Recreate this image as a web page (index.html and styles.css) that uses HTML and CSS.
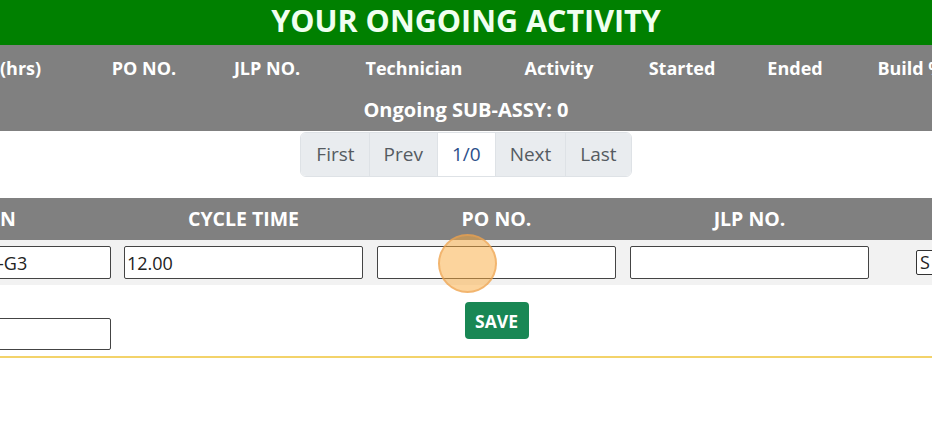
FILE: index.html
```html
<!DOCTYPE html>
<html lang="en">
<head>
<meta charset="utf-8">
<title>Your Ongoing Activity</title>
<link rel="stylesheet" href="styles.css">
</head>
<body>
<div class="page">
  <header class="title">YOUR ONGOING ACTIVITY</header>
  <section class="ongoing">
    <div class="cols">
      <span class="c first">(hrs)</span>
      <span class="c">PO NO.</span>
      <span class="c">JLP NO.</span>
      <span class="c">Technician</span>
      <span class="c">Activity</span>
      <span class="c">Started</span>
      <span class="c">Ended</span>
      <span class="c">Build %</span>
    </div>
    <div class="sub">Ongoing SUB-ASSY: 0</div>
  </section>
  <nav class="pager">
    <ul class="pages">
      <li class="pg">First</li>
      <li class="pg">Prev</li>
      <li class="pg active">1/0</li>
      <li class="pg">Next</li>
      <li class="pg">Last</li>
    </ul>
  </nav>
  <div class="form">
    <div class="fhead">
      <span class="h first">N</span>
      <span class="h">CYCLE TIME</span>
      <span class="h">PO NO.</span>
      <span class="h">JLP NO.</span>
      <span class="h"></span>
    </div>
    <div class="frow">
      <div class="cell"><input class="inp inp-first" type="text" value="-G3"></div>
      <div class="cell"><input class="inp" type="text" value="12.00"></div>
      <div class="cell"><input class="inp" type="text" value=""></div>
      <div class="cell"><input class="inp" type="text" value=""></div>
      <div class="cell last"><span class="sel">S</span></div>
    </div>
    <div class="frow2">
      <div class="cell"><input class="inp inp-first inp2" type="text" value=""></div>
      <div class="cell"></div>
      <div class="cell center"><button class="save" type="button">SAVE</button></div>
      <div class="cell"></div>
      <div class="cell"></div>
    </div>
  </div>
  <div class="rule"></div>
  <span class="cursor"></span>
</div>
</body>
</html>
```
FILE: styles.css
```css
* { box-sizing: border-box; }
html, body { margin: 0; padding: 0; background: #fff; }
body { font-family: "Open Sans", "Noto Sans", sans-serif; }

.page {
  position: relative;
  width: 932px;
  overflow: hidden;
}

.title {
  background: #008000;
  color: #f0fff0;
  font-weight: 700;
  font-size: 30.5px;
  text-align: center;
  line-height: 41px;
  padding-bottom: 4px;
  margin-top: -2px;
  padding-top: 2px;
}

.ongoing {
  background: #808080;
  color: #fff;
  font-weight: 700;
  font-size: 18px;
  height: 86px;
  padding-top: 10px;
}
.cols {
  display: grid;
  grid-template-columns: 84px 120px 126px 168px 122px 124px 102px 130px;
  width: 976px;
  height: 26px;
  line-height: 26px;
  white-space: nowrap;
}
.c { text-align: center; }
.c.first { text-align: left; }
.sub {
  text-align: center;
  font-size: 20px;
  margin-top: 16px;
  line-height: 26px;
}

.pager {
  display: flex;
  justify-content: center;
  padding-top: 1px;
}
.pages {
  display: flex;
  margin: 0;
  padding: 0;
  list-style: none;
  border: 1px solid #dee2e6;
  border-radius: 6px;
  overflow: hidden;
}
.pg {
  height: 43px;
  line-height: 43px;
  padding: 0 14px;
  background: #e9ecef;
  color: #555b61;
  font-size: 19px;
  border-left: 1px solid #dee2e6;
}
.pg:first-child { border-left: 0; padding-left: 15px; }
.pg.active { background: #fff; color: #2c4f8b; padding: 0 14px; }

.form { margin-top: 21px; }
.fhead, .frow, .frow2 {
  display: grid;
  grid-template-columns: 117px 253px 253px 253px 1fr;
}
.fhead {
  background: #808080;
  color: #fff;
  font-weight: 700;
  font-size: 19.5px;
  height: 42px;
  line-height: 42px;
  text-align: center;
}
.h.first { text-align: left; }

.frow {
  background: #f2f2f2;
  height: 45px;
  padding-top: 6px;
}
.cell { padding: 0 7px; }
.cell.last { padding: 4px 0 0 40px; }
.cell.center { display: flex; justify-content: center; padding: 17px 0 0; }

.inp {
  display: block;
  width: 239px;
  height: 33px;
  border: 1px solid #444;
  border-radius: 2px;
  background: #fff;
  font-family: "Open Sans", "Noto Sans", sans-serif;
  font-size: 18px;
  color: #222;
  padding: 0 2px;
}
.inp-first {
  width: 119px;
  margin-left: -15px;
  padding-left: 5px;
}
.frow2 { height: 71px; }
.frow2 .cell:first-child { padding-top: 33px; }
.inp2 { height: 32px; }

.sel {
  display: block;
  width: 80px;
  height: 25px;
  line-height: 23px;
  border: 1px solid #333;
  border-radius: 2px;
  padding-left: 3px;
  background: #fff;
  font-size: 18px;
  color: #222;
}

.save {
  width: 64px;
  height: 37px;
  border: 0;
  border-radius: 4px;
  background: #198754;
  color: #fff;
  font-family: "Open Sans", "Noto Sans", sans-serif;
  font-weight: 700;
  font-size: 17.5px;
  padding: 0;
}

.rule {
  height: 2px;
  background: #f3d36a;
}

.cursor {
  position: absolute;
  left: 438px;
  top: 234px;
  width: 59px;
  height: 59px;
  border-radius: 50%;
  background: rgba(250, 170, 60, 0.5);
  border: 2px solid rgba(235, 160, 80, 0.6);
}
```
